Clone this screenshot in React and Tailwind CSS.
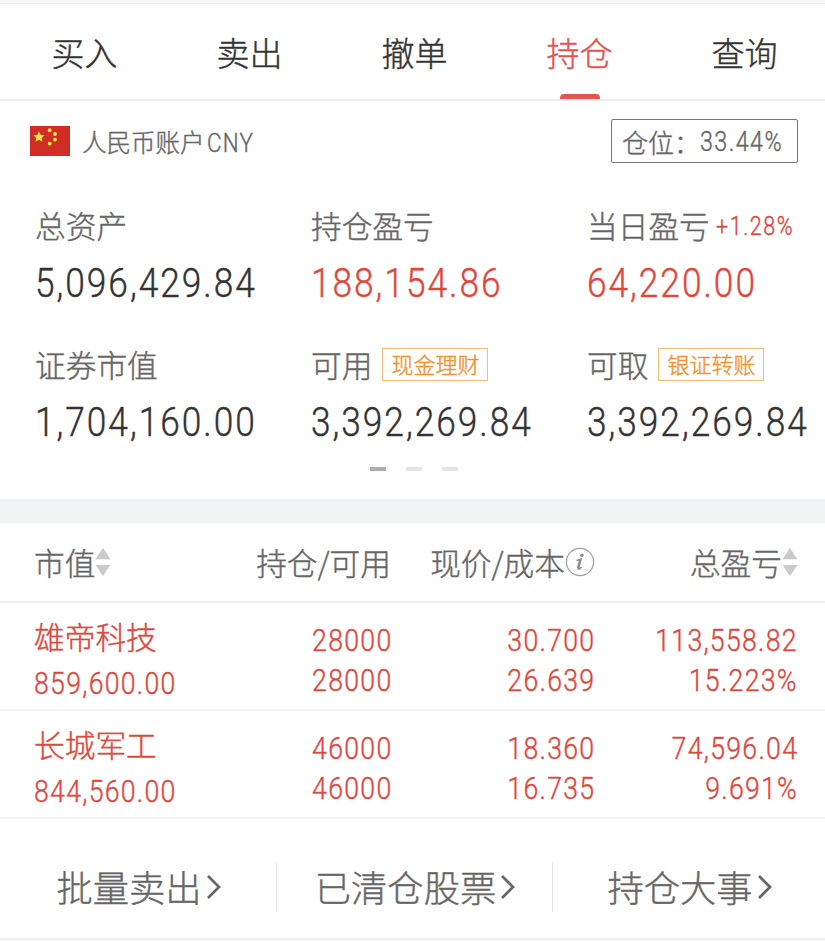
import { useState } from 'react';
import clsx from 'clsx';

const TABS = ['买入', '卖出', '撤单', '持仓', '查询'];

const STATS = [
  { label: '总资产', value: '5,096,429.84' },
  { label: '持仓盈亏', value: '188,154.86', up: true },
  { label: '当日盈亏', value: '64,220.00', up: true, rate: '+1.28%' },
  { label: '证券市值', value: '1,704,160.00' },
  { label: '可用', value: '3,392,269.84', tag: '现金理财' },
  { label: '可取', value: '3,392,269.84', tag: '银证转账' },
];

const HOLDINGS = [
  {
    name: '雄帝科技',
    marketValue: '859,600.00',
    held: '28000',
    available: '28000',
    price: '30.700',
    cost: '26.639',
    profit: '113,558.82',
    profitRate: '15.223%',
  },
  {
    name: '长城军工',
    marketValue: '844,560.00',
    held: '46000',
    available: '46000',
    price: '18.360',
    cost: '16.735',
    profit: '74,596.04',
    profitRate: '9.691%',
  },
];

const LINKS = ['批量卖出', '已清仓股票', '持仓大事'];

// Narrow, DIN-like numerals
function Num({ children, className }) {
  return (
    <span className={clsx("inline-block whitespace-nowrap font-['Roboto',sans-serif] scale-x-[0.86]", className)}>
      {children}
    </span>
  );
}

function Flag() {
  const star = '0,-5.6 1.7,-1.9 5.6,-1.7 2.6,1 3.5,4.8 0,2.8 -3.5,4.8 -2.6,1 -5.6,-1.7 -1.7,-1.9';
  return (
    <svg width="40" height="30" viewBox="0 0 40 30" className="shrink-0">
      <rect width="40" height="30" fill="#d02d25" />
      <g fill="#fbe94a">
        <polygon points={star} transform="translate(9 11)" />
        <circle cx="19.7" cy="4.2" r="1.9" />
        <circle cx="25" cy="8" r="1.9" />
        <circle cx="25" cy="13.6" r="1.9" />
        <circle cx="19.7" cy="17.6" r="1.9" />
      </g>
    </svg>
  );
}

function SortIcon() {
  return (
    <svg width="16" height="30" viewBox="0 0 16 30" fill="#cacaca" className="shrink-0">
      <path d="M8 1 15.5 12.3H.5z" />
      <path d="M8 29 .5 18h15z" />
    </svg>
  );
}

function InfoIcon() {
  return (
    <svg width="30" height="30" viewBox="0 0 30 30" fill="none" className="shrink-0">
      <circle cx="15" cy="15" r="13.6" stroke="#a3a3a3" strokeWidth="1.3" />
      <circle cx="16.9" cy="8.2" r="1.8" fill="#8c8c8c" />
      <path d="M11.4 13.4q2.6-.3 4.6-1.2l-2.6 8.6q-.5 1.9.9 1.2 1-.6 2.2-2" stroke="#8c8c8c" strokeWidth="1.5" />
      <path d="m15.4 12.4-2.4 9" stroke="#8c8c8c" strokeWidth="2.4" />
    </svg>
  );
}

function Chevron() {
  return (
    <svg width="16" height="26" viewBox="0 0 16 26" fill="none" stroke="#666" strokeWidth="2.7" className="ml-1 shrink-0">
      <path d="M2 2 13 13 2 24" />
    </svg>
  );
}

export default function App() {
  const [tab, setTab] = useState('持仓');

  return (
    <div className="h-[941px] w-[825px] overflow-hidden bg-white font-['Noto_Sans_CJK_SC',sans-serif] font-light text-[#666] [-webkit-text-stroke:0.4px]">
      <div className="h-1 border-b border-[#efefef] bg-[#f7f7f7]" />

      <nav className="flex h-[97px] border-b-2 border-[#ededed]">
        {TABS.map((t) => (
          <button
            key={t}
            onClick={() => setTab(t)}
            className={clsx(
              'flex flex-1 flex-col items-center pl-1 text-[33px] leading-[97px]',
              tab === t ? 'text-[#e5534d]' : 'text-[#333]'
            )}
          >
            <span className="h-[90px]">{t}</span>
            {tab === t && <span className="h-[5px] w-10 rounded-t-sm bg-[#e5534d]" />}
          </button>
        ))}
      </nav>

      <div className="flex items-center justify-between pt-[18px] pr-[27px] pl-[30px]">
        <div className="flex items-center text-[24.5px] leading-8">
          <Flag />
          <span className="mt-0.5 ml-3">人民币账户</span>
          <Num className="mt-1 ml-0.5 origin-left text-[26px] tracking-[1.4px]">CNY</Num>
        </div>
        <div className="flex h-11 w-[187px] items-center rounded-xs border border-[#777] pl-2.5 text-[26px] whitespace-nowrap">
          <span className="w-[78px] shrink-0">仓位：</span>
          <Num className="mt-0.5 origin-left text-[27px] tracking-[1.7px]">33.44%</Num>
        </div>
      </div>

      <div className="grid grid-cols-[276px_276px_273px] gap-y-[45px] pt-[42px] pl-[35px]">
        {STATS.map((s) => (
          <div key={s.label} className="whitespace-nowrap">
            <div className="flex h-10 items-center text-[30.7px]">
              {s.label}
              {s.rate && <Num className="mt-1 ml-1.5 origin-left text-[25px] tracking-[1.8px] text-[#de473d]">{s.rate}</Num>}
              {s.tag && (
                <span className="ml-2.5 flex h-[33px] items-center border border-[#f5bd75] px-2 pb-0.5 text-[22px] text-[#f0922e]">
                  {s.tag}
                </span>
              )}
            </div>
            <div className={clsx('mt-3.5 h-10 text-[41px] leading-[41px]', s.up ? 'text-[#de473d]' : 'text-[#333]')}>
              <Num className="origin-left tracking-[2.3px]">{s.value}</Num>
            </div>
          </div>
        ))}
      </div>

      <div className="mt-[29px] flex justify-center gap-5 pl-[3px]">
        <span className="h-1 w-4 bg-[#adadad]" />
        <span className="h-1 w-4 bg-[#e5e5e5]" />
        <span className="h-1 w-4 bg-[#e5e5e5]" />
      </div>

      <div className="mt-7 h-6 bg-[#f2f3f5]" />

      <div className="grid h-20 grid-cols-[175px_182px_204px_203px] items-center border-b-2 border-[#ededed] pl-[34px] text-[30.7px]">
        <div className="flex items-center">市值<SortIcon /></div>
        <div className="text-right">持仓/可用</div>
        <div className="flex items-center justify-end">现价/成本<InfoIcon /></div>
        <div className="flex items-center justify-end">总盈亏<SortIcon /></div>
      </div>

      {HOLDINGS.map((h) => (
        <div
          key={h.name}
          className="grid h-[108px] grid-cols-[175px_183px_203px_203px] border-b-2 border-[#f5f5f5] pl-[34px] text-[31px] leading-10 whitespace-nowrap text-[#de473d]"
        >
          <div className="flex flex-col items-start pt-[13px]">
            <span className="text-[30.7px]">{h.name}</span>
            <Num className="mt-2 origin-left tracking-[1.5px]">{h.marketValue}</Num>
          </div>
          <div className="flex flex-col items-end pt-[18px]">
            <Num className="origin-right tracking-[1.5px]">{h.held}</Num>
            <Num className="origin-right tracking-[1.5px]">{h.available}</Num>
          </div>
          <div className="flex flex-col items-end pt-[18px]">
            <Num className="origin-right tracking-[1.5px]">{h.price}</Num>
            <Num className="origin-right tracking-[1.5px]">{h.cost}</Num>
          </div>
          <div className="flex flex-col items-end pt-[18px]">
            <Num className="origin-right tracking-[1.5px]">{h.profit}</Num>
            <Num className="origin-right tracking-[1.5px]">{h.profitRate}</Num>
          </div>
        </div>
      ))}

      <div className="grid h-[122px] grid-cols-[277px_276px_272px] items-center border-b-3 border-[#f2f2f2] pt-4 text-[36.3px]">
        {LINKS.map((l) => (
          <button key={l} className="flex h-[50px] items-center justify-center border-r border-[#e5e5e5] pl-0.5 last:border-r-0">
            {l}
            <Chevron />
          </button>
        ))}
      </div>
    </div>
  );
}
